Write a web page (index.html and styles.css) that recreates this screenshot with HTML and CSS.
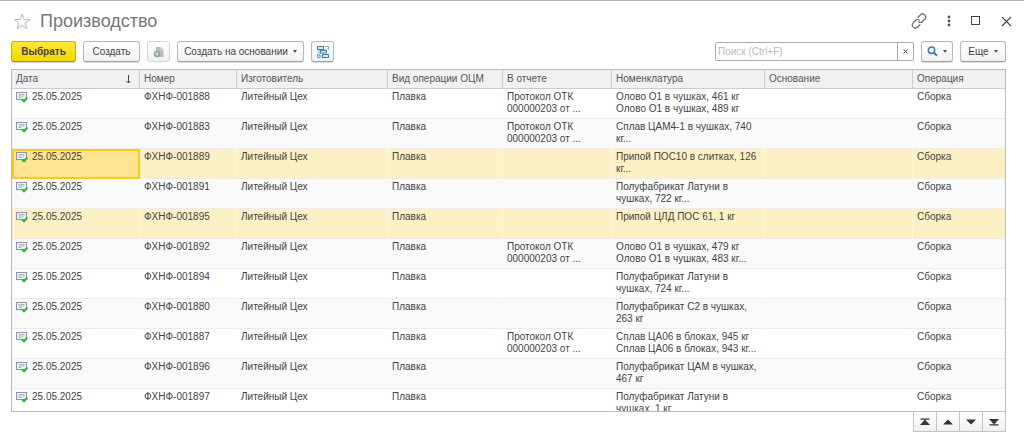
FILE: index.html
```html
<!DOCTYPE html>
<html lang="ru">

<head>
    <meta charset="UTF-8">
    <meta name="viewport" content="width=device-width, initial-scale=1.0">
    <title>Производство</title>
    <link rel="stylesheet" href="styles.css">
</head>

<body>
    <svg class="sprite" aria-hidden="true">
        <symbol id="doc" viewBox="0 0 12 12">
            <rect x="0.5" y="1.5" width="10" height="7" fill="#eef3f8" stroke="#8797a8" />
            <path d="M2.500 3.500h6M2.500 5h6M2.500 6.500h3" stroke="#9aa8b8" stroke-width="0.8" />
            <path d="M6 8.200l2 2L11.500 6.500" fill="none" stroke="#2dbb3e" stroke-width="2.200" />
        </symbol>
    </svg>

    <header class="title-bar">
        <button class="icon-button" aria-label="В избранное">
            <svg width="18" height="17" viewBox="0 0 18 17"><path d="M9 1.2l2 5.3 5.6.2-4.4 3.4 1.6 5.500L9 12.400l-4.800 3.200 1.600-5.500L1.400 6.700l5.600-.2z" fill="none" stroke="#b4b8bc" /></svg>
        </button>
        <h1>Производство</h1>
        <div class="window-controls">
            <button class="icon-button" aria-label="Получить ссылку">
                <svg width="16" height="16" viewBox="0 0 16 16" fill="none" stroke="#666" stroke-width="1.2" stroke-linecap="round"><path d="M7 4.300l2.300-2.300a3 3 0 0 1 4.500 4.200L11.500 8.500a3 3 0 0 1-3.800.4M9 11.700L6.700 14a3 3 0 0 1-4.500-4.200L4.500 7.500a3 3 0 0 1 3.800-.4" /></svg>
            </button>
            <button class="icon-button" aria-label="Меню">
                <svg width="4" height="12" viewBox="0 0 4 12" fill="#555"><circle cx="2" cy="2" r="1.400" /><circle cx="2" cy="6" r="1.400" /><circle cx="2" cy="10" r="1.400" /></svg>
            </button>
            <button class="icon-button" aria-label="Развернуть">
                <svg width="10" height="10" viewBox="0 0 10 10"><rect x="0.500" y="0.500" width="8" height="8" fill="none" stroke="#444" /></svg>
            </button>
            <button class="icon-button" aria-label="Закрыть">
                <svg width="11" height="11" viewBox="0 0 11 11"><path d="M1 1l9 9M10 1l-9 9" stroke="#444" stroke-width="1.100" /></svg>
            </button>
        </div>
    </header>

    <div class="toolbar">
        <button class="button button--primary">Выбрать</button>
        <button class="button button--create">Создать</button>
        <button class="button button--icon" aria-label="Скопировать" disabled>
            <svg width="12" height="12" viewBox="0 0 12 12"><path d="M3 1h5l2.500 2.500V11H3z" fill="#b9bdba" /><path d="M8 1v2.500h2.500" fill="none" stroke="#e4e6e4" stroke-width="0.800" /><circle cx="4" cy="8" r="3.200" fill="#8fa896" /><path d="M4 6.200v3.600M2.200 8h3.600" stroke="#e6eee8" /></svg>
        </button>
        <button class="button button--based">Создать на основании <span class="caret"></span></button>
        <button class="button button--icon" aria-label="Структура подчиненности">
            <svg width="12" height="12" viewBox="0 0 12 12" fill="#d5e6f2" stroke="#4583ad"><path d="M8.500 0.500h3v3M0.500 8v3.500h3M2 4v6h4M8 5V3" fill="none" stroke="#76a2c0" /><rect x="0.500" y="0.500" width="6" height="3" /><rect x="3.500" y="4.500" width="6" height="2.500" /><rect x="5.500" y="8.500" width="6" height="3" /></svg>
        </button>

        <div class="search">
            <input type="text" aria-label="Поиск" placeholder="Поиск (Ctrl+F)">
            <button aria-label="Очистить"><svg width="5" height="5" viewBox="0 0 5 5"><path d="M0.500 0.500l4 4M4.500 0.500l-4 4" stroke="#555" /></svg></button>
        </div>
        <button class="button button--find" aria-label="Найти">
            <svg width="11" height="11" viewBox="0 0 11 11" fill="none" stroke="#2f7fb8"><circle cx="4.500" cy="4.200" r="3.200" stroke-width="1.500" /><path d="M7 6.800l3 3" stroke-width="2" /></svg>
            <span class="caret"></span>
        </button>
        <button class="button button--more">Еще <span class="caret"></span></button>
    </div>

    <main class="list">
        <table>
            <colgroup>
                <col class="col-date">
                <col class="col-number">
                <col class="col-maker">
                <col class="col-kind">
                <col class="col-report">
                <col class="col-item">
                <col>
                <col class="col-operation">
            </colgroup>
            <thead>
                <tr>
                    <th><div class="sorted">Дата <svg width="7" height="9" viewBox="0 0 7 9"><path d="M3.500 0v8M1.500 6L3.500 8 5.500 6" fill="none" stroke="#444" /></svg></div></th>
                    <th>Номер</th>
                    <th>Изготовитель</th>
                    <th>Вид операции ОЦМ</th>
                    <th>В отчете</th>
                    <th>Номенклатура</th>
                    <th>Основание</th>
                    <th>Операция</th>
                </tr>
            </thead>
            <tbody>
                <tr>
                    <td><svg class="doc"><use href="#doc" /></svg>25.05.2025</td>
                    <td>ФХНФ-001888</td>
                    <td>Литейный Цех</td>
                    <td>Плавка</td>
                    <td>Протокол ОТК<br>000000203 от ...</td>
                    <td>Олово О1 в чушках, 461 кг<br>Олово О1 в чушках, 489 кг</td>
                    <td></td>
                    <td>Сборка</td>
                </tr>
                <tr>
                    <td><svg class="doc"><use href="#doc" /></svg>25.05.2025</td>
                    <td>ФХНФ-001883</td>
                    <td>Литейный Цех</td>
                    <td>Плавка</td>
                    <td>Протокол ОТК<br>000000203 от ...</td>
                    <td>Сплав ЦАМ4-1 в чушках, 740<br>кг...</td>
                    <td></td>
                    <td>Сборка</td>
                </tr>
                <tr class="marked">
                    <td class="current"><svg class="doc"><use href="#doc" /></svg>25.05.2025</td>
                    <td>ФХНФ-001889</td>
                    <td>Литейный Цех</td>
                    <td>Плавка</td>
                    <td></td>
                    <td>Припой ПОС10 в слитках, 126<br>кг...</td>
                    <td></td>
                    <td>Сборка</td>
                </tr>
                <tr>
                    <td><svg class="doc"><use href="#doc" /></svg>25.05.2025</td>
                    <td>ФХНФ-001891</td>
                    <td>Литейный Цех</td>
                    <td>Плавка</td>
                    <td></td>
                    <td>Полуфабрикат Латуни в<br>чушках, 722 кг...</td>
                    <td></td>
                    <td>Сборка</td>
                </tr>
                <tr class="marked">
                    <td><svg class="doc"><use href="#doc" /></svg>25.05.2025</td>
                    <td>ФХНФ-001895</td>
                    <td>Литейный Цех</td>
                    <td>Плавка</td>
                    <td></td>
                    <td>Припой ЦЛД ПОС 61, 1 кг</td>
                    <td></td>
                    <td>Сборка</td>
                </tr>
                <tr>
                    <td><svg class="doc"><use href="#doc" /></svg>25.05.2025</td>
                    <td>ФХНФ-001892</td>
                    <td>Литейный Цех</td>
                    <td>Плавка</td>
                    <td>Протокол ОТК<br>000000203 от ...</td>
                    <td>Олово О1 в чушках, 479 кг<br>Олово О1 в чушках, 483 кг...</td>
                    <td></td>
                    <td>Сборка</td>
                </tr>
                <tr>
                    <td><svg class="doc"><use href="#doc" /></svg>25.05.2025</td>
                    <td>ФХНФ-001894</td>
                    <td>Литейный Цех</td>
                    <td>Плавка</td>
                    <td></td>
                    <td>Полуфабрикат Латуни в<br>чушках, 724 кг...</td>
                    <td></td>
                    <td>Сборка</td>
                </tr>
                <tr>
                    <td><svg class="doc"><use href="#doc" /></svg>25.05.2025</td>
                    <td>ФХНФ-001880</td>
                    <td>Литейный Цех</td>
                    <td>Плавка</td>
                    <td></td>
                    <td>Полуфабрикат С2 в чушках,<br>263 кг</td>
                    <td></td>
                    <td>Сборка</td>
                </tr>
                <tr>
                    <td><svg class="doc"><use href="#doc" /></svg>25.05.2025</td>
                    <td>ФХНФ-001887</td>
                    <td>Литейный Цех</td>
                    <td>Плавка</td>
                    <td>Протокол ОТК<br>000000203 от ...</td>
                    <td>Сплав ЦА06 в блоках, 945 кг<br>Сплав ЦА06 в блоках, 943 кг...</td>
                    <td></td>
                    <td>Сборка</td>
                </tr>
                <tr>
                    <td><svg class="doc"><use href="#doc" /></svg>25.05.2025</td>
                    <td>ФХНФ-001896</td>
                    <td>Литейный Цех</td>
                    <td>Плавка</td>
                    <td></td>
                    <td>Полуфабрикат ЦАМ в чушках,<br>467 кг</td>
                    <td></td>
                    <td>Сборка</td>
                </tr>
                <tr>
                    <td><svg class="doc"><use href="#doc" /></svg>25.05.2025</td>
                    <td>ФХНФ-001897</td>
                    <td>Литейный Цех</td>
                    <td>Плавка</td>
                    <td></td>
                    <td>Полуфабрикат Латуни в<br>чушках, 1 кг</td>
                    <td></td>
                    <td>Сборка</td>
                </tr>
            </tbody>
        </table>
    </main>

    <nav class="pager" aria-label="Прокрутка списка">
        <button aria-label="В начало"><svg width="10" height="8" viewBox="0 0 10 8" fill="#333"><path d="M0.500 0.500h9v1.200h-9zM5 1.500L10 7H0z" /></svg></button>
        <button aria-label="Вверх"><svg width="10" height="8" viewBox="0 0 10 8" fill="#333"><path d="M5 1.500L10 6.500H0z" /></svg></button>
        <button aria-label="Вниз"><svg width="10" height="8" viewBox="0 0 10 8" fill="#333"><path d="M0 1.500h10L5 6.500z" /></svg></button>
        <button aria-label="В конец"><svg width="10" height="8" viewBox="0 0 10 8" fill="#333"><path d="M0 1h10L5 6.500zM0.500 6.300h9v1.200h-9z" /></svg></button>
    </nav>
</body>

</html>
```
FILE: styles.css
```css
* {
    box-sizing: border-box;
}

body {
    display: flex;
    flex-direction: column;
    height: 100vh;
    margin: 0;
    padding: 0 18px 11px 11px;
    border-top: 1px solid #b0b0b0;
    background-color: #fff;
    color: #444;
    font-family: "Liberation Sans", Arial, sans-serif;
    font-size: 10px;
    line-height: 12px;
}

button,
input {
    font: inherit;
    color: inherit;
}

.sprite {
    display: none;
}

.title-bar {
    display: flex;
    align-items: center;
    height: 40px;
    padding-left: 2px;
}

.title-bar h1 {
    margin: 0 auto 0 9px;
    color: #777;
    font-size: 18px;
    font-weight: normal;
    line-height: 20px;
}

.icon-button {
    display: flex;
    padding: 0;
    border: none;
    background: none;
}

.window-controls {
    display: flex;
    align-items: center;
    gap: 20px;
    margin-right: -6px;
}

.toolbar {
    display: flex;
    align-items: center;
    gap: 7px;
    margin-bottom: 7px;
}

.button {
    display: flex;
    align-items: center;
    justify-content: center;
    height: 21px;
    padding: 0 9px;
    border: 1px solid #b8b8b8;
    border-bottom-color: #a0a0a0;
    border-radius: 3px;
    background: linear-gradient(#fff, #f1f1f1);
    box-shadow: 0 1px 0 #ddd;
    white-space: nowrap;
}

.button:disabled {
    border-color: #d5d5d5;
    box-shadow: none;
}

.button--primary {
    width: 65px;
    border-color: #cfb200;
    border-bottom-color: #a89000;
    background: linear-gradient(#ffe838, #f6d800);
    font-weight: bold;
}

.button--create {
    width: 57px;
}

.button--icon {
    width: 23px;
    padding: 0;
}

.button--based {
    width: 127px;
}

.button--find {
    width: 32px;
    padding: 0;
}

.button--more {
    width: 46px;
}

.caret {
    margin-left: 5px;
    border: 2px solid transparent;
    border-top: 3px solid #555;
    border-bottom: none;
}

.search {
    display: flex;
    width: 199px;
    height: 19px;
    margin-left: auto;
    border: 1px solid #aaa;
    border-radius: 2px;
}

.search input {
    flex: 1;
    min-width: 0;
    padding: 0 2px;
    border: none;
    outline: none;
    background: none;
}

.search input::placeholder {
    color: #bbb;
}

.search button {
    display: flex;
    align-items: center;
    justify-content: center;
    width: 16px;
    padding: 0;
    border: none;
    border-left: 1px solid #aaa;
    background: none;
}

.list {
    flex: 1;
    min-height: 0;
    overflow: hidden;
    border: 1px solid #bbb;
}

table {
    width: 100%;
    border-collapse: separate;
    border-spacing: 0;
    table-layout: fixed;
}

.col-date {
    width: 128px;
}

.col-number {
    width: 97px;
}

.col-maker {
    width: 151px;
}

.col-kind {
    width: 115px;
}

.col-report {
    width: 109px;
}

.col-item {
    width: 153px;
}

.col-operation {
    width: 92px;
}

th {
    height: 19px;
    padding: 0 4px;
    border-right: 1px solid #ccc;
    border-bottom: 1px solid #ccc;
    background-color: #f1f1f1;
    color: #555;
    font-weight: normal;
    text-align: left;
}

.sorted {
    display: flex;
    align-items: center;
    justify-content: space-between;
    padding-right: 3px;
}

td {
    height: 30px;
    padding: 2px 4px;
    border-right: 1px solid transparent;
    border-bottom: 1px solid #ececec;
    vertical-align: top;
    white-space: nowrap;
}

th:last-child,
td:last-child {
    border-right: none;
}

tbody tr:nth-child(even) {
    background-color: #f9f9f9;
}

tbody tr.marked {
    background-color: #fdf0c4;
}

.marked td {
    border-right-color: #fff8e0;
}

.marked .current {
    padding: 0 2px;
    border: 2px solid #f9c91e;
    background-color: #fee391;
}

.doc {
    width: 12px;
    height: 12px;
    margin-right: 4px;
    vertical-align: top;
}

.pager {
    display: flex;
    justify-content: flex-end;
}

.pager button {
    display: flex;
    align-items: center;
    justify-content: center;
    width: 23px;
    height: 20px;
    padding: 0;
    border: 1px solid #c4c4c4;
    border-top: none;
    border-left: none;
    background: linear-gradient(#fff, #f0f0f0);
}

.pager button:first-child {
    width: 24px;
    border-left: 1px solid #c4c4c4;
}
```
